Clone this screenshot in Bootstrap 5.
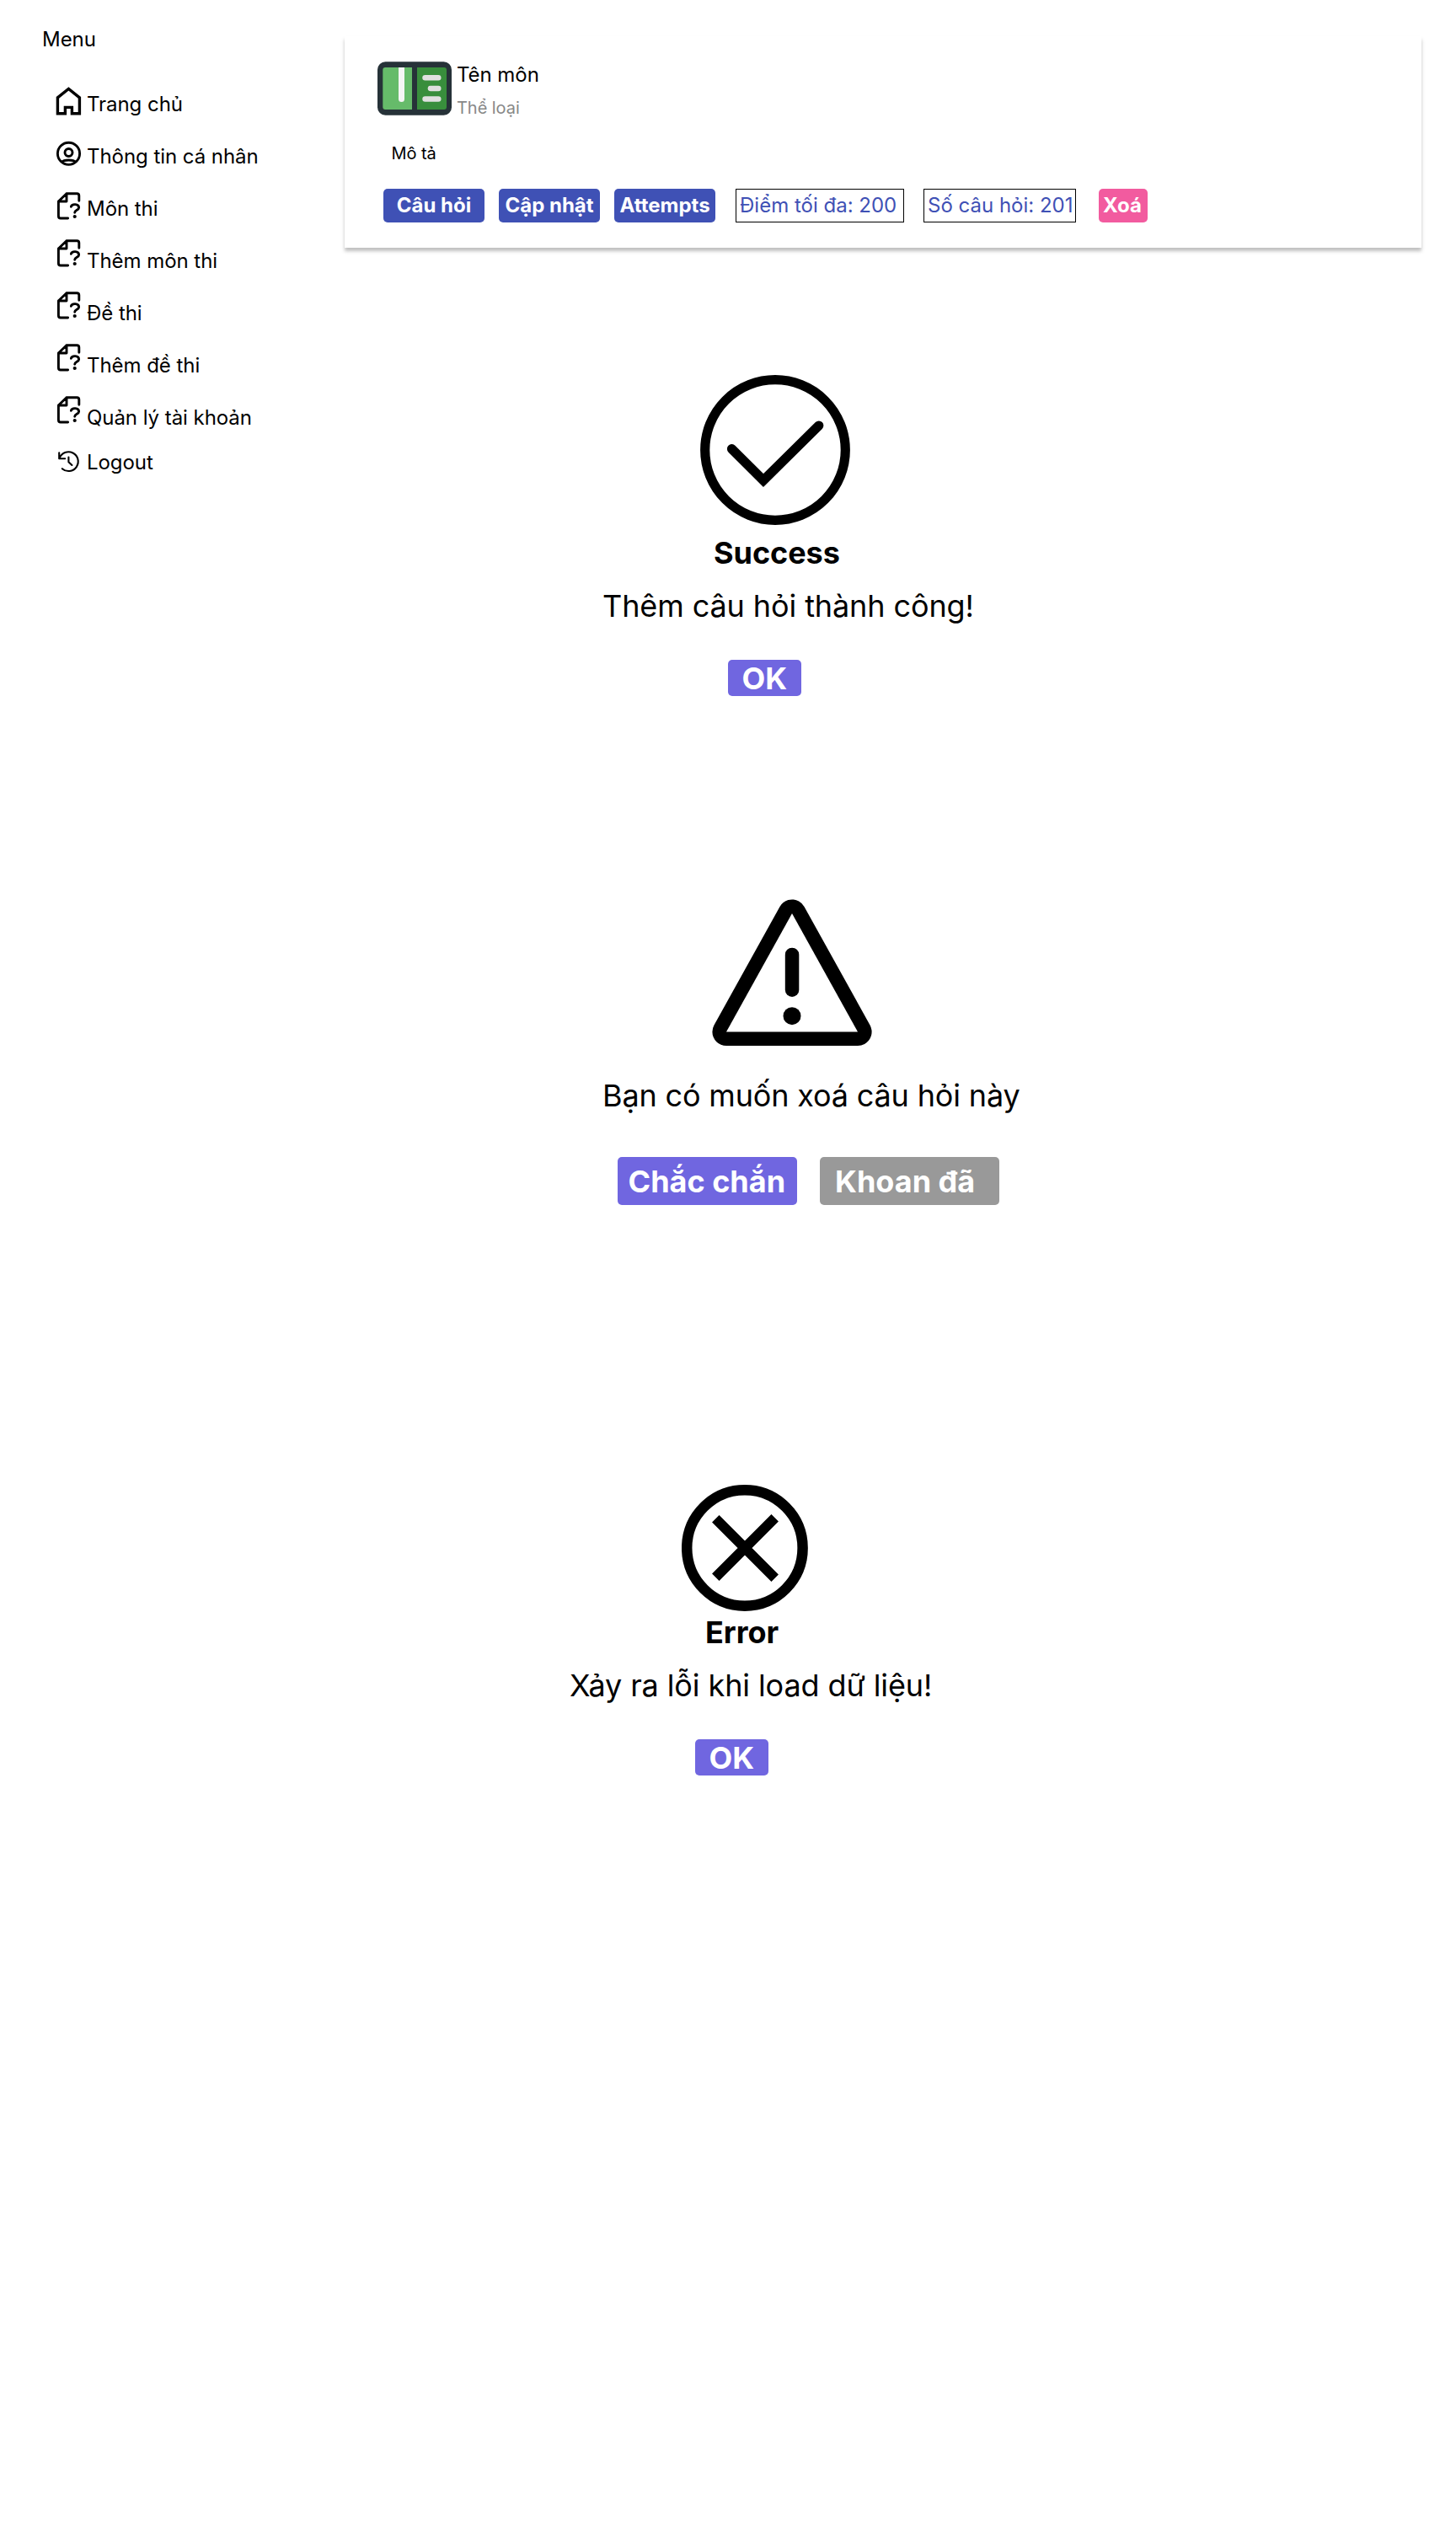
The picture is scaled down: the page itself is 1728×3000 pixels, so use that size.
<!DOCTYPE html>
<html lang="vi">
<head>
<meta charset="utf-8">
<meta name="viewport" content="width=device-width, initial-scale=1">
<title>Quản lý môn thi</title>
<link href="https://cdn.jsdelivr.net/npm/bootstrap@5.3.0/dist/css/bootstrap.min.css" rel="stylesheet">
<style>
body{font-family:Inter,"Liberation Sans",sans-serif;font-size:24px;line-height:29px;letter-spacing:-.05px;color:#000;background:#fff;min-height:3000px}
svg{display:block;flex:none}
.side{width:409px;padding:32px 0 0 50px;flex:none}
.menu-list{margin-top:35px;padding-left:14px}
.menu-item{height:62px;color:#000;text-decoration:none}
.menu-item svg{margin-right:3px}
.menu-item span{margin-top:13px}
.menu-item.low svg{margin-top:6px}
.menu-item.out span{margin-top:4px}
.ic{fill:none;stroke:#000}
.subject{width:1278px;height:251px;margin-top:43px;padding:30px 0 0 39px;background:#fff;box-shadow:0 4px 4px rgba(0,0,0,.25)}
.subject-text{margin-left:6px;padding-top:1px}
.sm-line{font-size:20px;line-height:24px}
.cat{color:#888;margin-top:13px}
.desc{margin:30px 0 0 16.5px}
.tools{margin:30px 0 0 7px}
.tools .btn,.dlg .btn{font-weight:700;border:0;border-radius:5px;color:#fff;white-space:nowrap;flex:none}
.tools .btn{width:120px;height:40px;padding:0 0 2px;font-size:24px;line-height:29px;background:#3f51b5;margin-right:17px}
.tools .btn.del{width:58px;background:#f25b9f;margin:0;padding-right:2px}
.info{height:40px;border:1px solid #000;color:#3f51b5;padding:3.5px 0 0 4px;white-space:nowrap;flex:none;letter-spacing:0}
.dlg{font-size:36px;line-height:44px;white-space:nowrap}
.dlg p{margin:0}
.dlg .msg{letter-spacing:-.1px}
.dlg .ask{letter-spacing:-.16px}
.dlg .btn{font-size:36px;line-height:44px;padding:0;background:#7066e0;text-align:left}
.dlg .ok{width:87px;height:43px;padding-left:16.5px}
.dlg .wide{width:213px;height:57px;padding:0 0 0 12.5px}
.dlg .btn.later{background:#999;padding-left:18px}
.success{margin:151px 0 0 306px}
.confirm{margin:241px 0 0 306px}
.failure{margin:332px 0 0 267px}
</style>
</head>
<body>
<svg width="0" height="0" class="position-absolute"><defs>
<symbol id="doc" viewBox="0 0 36 36"><path d="M29.8 12.2V6.2Q29.8 3.7 27.3 3.7H15L5.4 13V30.5Q5.4 33 7.9 33H16.6M15 3.7V13H5.4M20.4 19.3C21.2 15.8 29.6 15.4 29.6 20.5C29.6 23.3 24.7 23.2 24.7 26.2" fill="none" stroke="#000" stroke-width="2.9" stroke-linecap="round" stroke-linejoin="round"/><circle cx="24.7" cy="31" r="2.1"/></symbol>
</defs></svg>
<div class="d-flex">
  <aside class="side">
    <div>Menu</div>
    <nav class="menu-list d-flex flex-column">
      <a class="menu-item low d-flex align-items-start"><svg class="ic" width="36" height="36"><path d="M4.4 32.7V13.8L17.4 3.4L30.4 13.8V32.7H21.4V25.4H13.4V32.7Z" stroke-width="3.4"/></svg><span>Trang chủ</span></a>
      <a class="menu-item low d-flex align-items-start"><svg class="ic" width="36" height="36"><g stroke-width="2.9"><circle cx="17.5" cy="18.3" r="13.1"/><circle cx="17.5" cy="17" r="4.5"/><path d="M9 28.6C12 25.2 23 25.2 26 28.6"/></g></svg><span>Thông tin cá nhân</span></a>
      <a class="menu-item low d-flex align-items-start"><svg width="36" height="36"><use href="#doc"/></svg><span>Môn thi</span></a>
      <a class="menu-item d-flex align-items-start"><svg width="36" height="36"><use href="#doc"/></svg><span>Thêm môn thi</span></a>
      <a class="menu-item d-flex align-items-start"><svg width="36" height="36"><use href="#doc"/></svg><span>Đề thi</span></a>
      <a class="menu-item d-flex align-items-start"><svg width="36" height="36"><use href="#doc"/></svg><span>Thêm đề thi</span></a>
      <a class="menu-item d-flex align-items-start"><svg width="36" height="36"><use href="#doc"/></svg><span>Quản lý tài khoản</span></a>
      <a class="menu-item out d-flex align-items-start"><svg class="ic" width="36" height="36"><path d="M6.2 7.2V14.2H13.2M6.6 13.8A11.4 11.4 0 1 1 9.8 26.2M17.4 12.6V18.2L21.4 22" stroke-width="2.1" stroke-linecap="round" stroke-linejoin="round"/></svg><span>Logout</span></a>
    </nav>
  </aside>
  <main>
    <section class="subject">
      <div class="d-flex align-items-start">
        <svg width="88" height="64"><rect y=".2" width="88" height="63.5" rx="9.5" fill="#263238"/><path d="M41 7H9.300Q6.300 7 6.300 10V54Q6.300 57 9.300 57H41Z" fill="#66bb6a"/><path d="M47 7H79Q82 7 82 10V54Q82 57 79 57H47Z" fill="#388e3c"/><path d="M25 7H32V44.500A3.500 3.500 0 0 1 25 44.500Z" fill="#f5f5f5"/><g fill="#e0e0e0"><rect x="53.300" y="16" width="22.200" height="6.500" rx="3.250"/><rect x="59.600" y="28.700" width="15.900" height="6.500" rx="3.250"/><rect x="53.300" y="41.200" width="22.200" height="6.500" rx="3.250"/></g></svg>
        <div class="subject-text"><div>Tên môn</div><div class="sm-line cat">Thể loại</div></div>
      </div>
      <div class="sm-line desc">Mô tả</div>
      <div class="tools d-flex">
        <button class="btn">Câu hỏi</button><button class="btn">Cập nhật</button><button class="btn">Attempts</button>
        <div class="info" style="width:200px;margin-left:7px">Điểm tối đa: 200</div>
        <div class="info" style="width:181px;margin:0 27px 0 23px">Số câu hỏi: 201</div>
        <button class="btn del">Xoá</button>
      </div>
    </section>

    <section class="dlg success">
      <svg class="ic" width="178" height="178" style="margin-left:116px"><g stroke-width="11.200"><circle cx="89" cy="89" r="83.300"/><path d="M37.500 87.700L75 125L140.800 60" stroke-linecap="round"/></g></svg>
      <p class="fw-bold" style="margin:11px 0 19px 132px">Success</p>
      <p class="msg">Thêm câu hỏi thành công!</p>
      <button class="btn ok d-block" style="margin:42px 0 0 149px">OK</button>
    </section>

    <section class="dlg confirm">
      <svg width="190" height="175" style="margin-left:130px"><path d="M95 17L173 157.500H17Z" fill="#000" stroke="#000" stroke-width="33.200" stroke-linejoin="round"/><path d="M95 17L173 157.500H17Z" fill="#fff"/><rect x="86.800" y="57.700" width="16.500" height="58.300" rx="8.250"/><circle cx="95" cy="138.700" r="10.500"/></svg>
      <p class="ask" style="margin-top:36px">Bạn có muốn xoá câu hỏi này</p>
      <div class="d-flex" style="gap:27px;margin:51px 0 0 18px"><button class="btn wide">Chắc chắn</button><button class="btn wide later">Khoan đã</button></div>
    </section>

    <section class="dlg failure">
      <svg class="ic" width="150" height="150" style="margin-left:133px"><g stroke-width="12.500"><circle cx="74.900" cy="75" r="68.700"/><path d="M40.300 40.300L110.700 110.700M110.700 39.300L40.300 109.700" stroke-width="12"/></g></svg>
      <p class="fw-bold" style="margin:3px 0 19px 161px">Error</p>
      <p class="msg">Xảy ra lỗi khi load dữ liệu!</p>
      <button class="btn ok d-block" style="margin:42px 0 0 149px">OK</button>
    </section>
  </main>
</div>
<script src="https://cdn.jsdelivr.net/npm/bootstrap@5.3.0/dist/js/bootstrap.bundle.min.js"></script>
</body>
</html>
